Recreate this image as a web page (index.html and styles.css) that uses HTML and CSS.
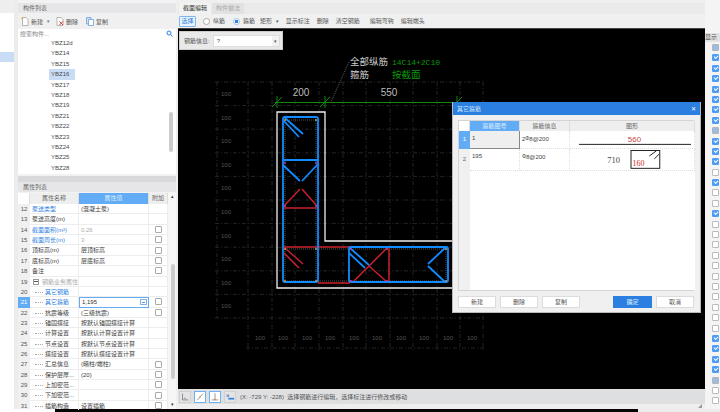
FILE: index.html
```html
<!DOCTYPE html>
<html lang="zh">
<head>
<meta charset="utf-8">
<title>截面编辑</title>
<link rel="stylesheet" href="styles.css">
</head>
<body>
<div class="app">
  <div class="work">
    <div class="nav"><div class="nav-top"></div><div class="nav-sel"></div></div>

    <div class="side">
      <div class="panel-title">构件列表</div>
      <div class="side-tools">
        <span class="tool"><svg class="ic" viewBox="0 0 8 9"><path d="M1.500.5h3.500l2 2v6h-5.500z" fill="#fff" stroke="#999" stroke-width=".7"/><path d="M0 1l2 1M1.500 0v2" stroke="#d9a13a" stroke-width=".7"/></svg>新建</span>
        <span class="caret">▾</span>
        <span class="tool"><svg class="ic" viewBox="0 0 8 9"><path d="M1 .5h4l2 2v6H1z" fill="#fff" stroke="#999" stroke-width=".7"/><path d="M3.500 4.500l3.500 3.500M7 4.500L3.500 8" stroke="#d33" stroke-width="1"/></svg>删除</span>
        <span class="tool"><svg class="ic" viewBox="0 0 8 9"><path d="M.5.500h4.500v6.500H.5z" fill="#cfe2f8" stroke="#5b93d6" stroke-width=".7"/><path d="M2.500 2.500h5v6h-5z" fill="#fff" stroke="#5b93d6" stroke-width=".7"/></svg>复制</span>
      </div>
      <div class="search"><span>搜索构件...</span><svg class="search-ic" viewBox="0 0 7 7"><circle cx="3" cy="3" r="2" fill="none" stroke="#2b7fe0"/><path d="M4.500 4.500L6.500 6.500" stroke="#2b7fe0"/></svg></div>
      <div class="list">
        <div class="list-items">
          <div class="list-item">YBZ12d</div>
          <div class="list-item">YBZ14</div>
          <div class="list-item">YBZ15</div>
          <div class="list-item is-sel">YBZ16</div>
          <div class="list-item">YBZ17</div>
          <div class="list-item">YBZ18</div>
          <div class="list-item">YBZ19</div>
          <div class="list-item">YBZ21</div>
          <div class="list-item">YBZ22</div>
          <div class="list-item">YBZ23</div>
          <div class="list-item">YBZ24</div>
          <div class="list-item">YBZ25</div>
          <div class="list-item">YBZ28</div>
        </div>
        <div class="list-scroll"><div class="list-thumb"></div></div>
      </div>
      <div class="split"></div>
      <div class="panel-title">属性列表</div>
      <div class="props">
        <div class="prop-table">
          <div class="ph"></div><div class="ph">属性名称</div><div class="ph ph-on">属性值</div><div class="ph">附加</div>

          <div class="pn">12</div><div class="pk blue">泵送类型</div><div class="pv">(混凝土泵)</div><div class="pc"></div>
          <div class="pn">13</div><div class="pk">泵送高度(m)</div><div class="pv"></div><div class="pc"></div>
          <div class="pn">14</div><div class="pk blue">截面面积(m²)</div><div class="pv mute">0.26</div><div class="pc"><i class="box"></i></div>
          <div class="pn">15</div><div class="pk blue">截面周长(m)</div><div class="pv mute">3</div><div class="pc"><i class="box"></i></div>
          <div class="pn">16</div><div class="pk">顶标高(m)</div><div class="pv">层顶标高</div><div class="pc"><i class="box"></i></div>
          <div class="pn">17</div><div class="pk">底标高(m)</div><div class="pv">层底标高</div><div class="pc"><i class="box"></i></div>
          <div class="pn">18</div><div class="pk">备注</div><div class="pv"></div><div class="pc"><i class="box"></i></div>
          <div class="pn">19</div><div class="pk mute"><i class="minus"></i>钢筋业务属性</div><div class="pv"></div><div class="pc"></div>
          <div class="pn">20</div><div class="pk tree blue">其它钢筋</div><div class="pv"></div><div class="pc"></div>
          <div class="pn pn-on">21</div><div class="pk tree blue">其它箍筋</div><div class="pv pv-edit">1,195<i class="more"></i></div><div class="pc"><i class="box"></i></div>
          <div class="pn">22</div><div class="pk tree">抗震等级</div><div class="pv">(三级抗震)</div><div class="pc"><i class="box"></i></div>
          <div class="pn">23</div><div class="pk tree">锚固搭接</div><div class="pv">按默认锚固搭接计算</div><div class="pc"></div>
          <div class="pn">24</div><div class="pk tree">计算设置</div><div class="pv">按默认计算设置计算</div><div class="pc"></div>
          <div class="pn">25</div><div class="pk tree">节点设置</div><div class="pv">按默认节点设置计算</div><div class="pc"></div>
          <div class="pn">26</div><div class="pk tree">搭接设置</div><div class="pv">按默认搭接设置计算</div><div class="pc"></div>
          <div class="pn">27</div><div class="pk tree">汇总信息</div><div class="pv">(暗柱/端柱)</div><div class="pc"><i class="box"></i></div>
          <div class="pn">28</div><div class="pk tree">保护层厚...</div><div class="pv">(20)</div><div class="pc"><i class="box"></i></div>
          <div class="pn">29</div><div class="pk tree">上加密范...</div><div class="pv"></div><div class="pc"><i class="box"></i></div>
          <div class="pn">30</div><div class="pk tree">下加密范...</div><div class="pv"></div><div class="pc"><i class="box"></i></div>
          <div class="pn">31</div><div class="pk tree">插筋构造</div><div class="pv">设置插筋</div><div class="pc"><i class="box"></i></div>
        </div>
        <div class="prop-scroll">
          <span class="arrow">▴</span>
          <div class="prop-thumb"></div>
          <span class="arrow arrow-down">▾</span>
        </div>
      </div>
    </div>

    <div class="main">
      <div class="tabs">
        <span class="tab tab-on">截面编辑</span>
        <span class="tab">构件做法</span>
      </div>
      <div class="main-tools">
        <span class="btn-sel">选择</span>
        <span class="radio"><i class="dot"></i>纵筋</span>
        <span class="radio"><i class="dot dot-on"></i>箍筋</span>
        <span class="mtool">矩形 <small>▾</small></span>
        <span class="mtool">显示标注</span>
        <span class="mtool">删除</span>
        <span class="mtool">清空钢筋</span>
        <span class="mtool mtool-sep">编辑弯钩</span>
        <span class="mtool">编辑端头</span>
      </div>
      <div class="canvas">
        <svg class="cad" viewBox="178 29 527 359">
          <g class="grid">
            <path d="M217 82V318M248 82V350M272 82V350M295 82V350M319 82V350M343 82V350M366 82V350M390 82V350M413 82V350M437 82V350M460 82V350M483 82V350"/>
            <path d="M215 82H484M215 105.600H484M215 129.200H484M215 152.800H484M215 176.400H484M215 200H484M215 223.600H484M215 247.200H484M215 270.800H484M215 294.400H484M215 318H484M246 348H484"/>
          </g>
          <g class="lab">
            <text x="226" y="96">100</text><text x="226" y="120">100</text><text x="226" y="143">100</text><text x="226" y="167">100</text><text x="226" y="190">100</text><text x="226" y="214">100</text><text x="226" y="238">100</text><text x="226" y="261">100</text><text x="226" y="285">100</text><text x="226" y="308">100</text>
            <text x="260" y="340">100</text><text x="283" y="340">100</text><text x="307" y="340">100</text><text x="330" y="340">100</text><text x="354" y="340">100</text><text x="377" y="340">100</text><text x="401" y="340">100</text><text x="424" y="340">100</text><text x="448" y="340">100</text><text x="472" y="340">100</text>
          </g>

          <path class="leader" d="M349 62L331 102"/>
          <text class="note" x="350" y="65">全部纵筋</text>
          <text class="note" x="350" y="78">箍筋</text>
          <text class="note-g" x="392" y="65">14C14+2C10</text>
          <text class="note-gc" x="392" y="78">按截面</text>

          <path class="dim" d="M275 102.500H458M277 96V108M325 96V108M457 96V108M272 107L282 97M320 107L330 97M452 107L462 97"/>
          <text class="dimt" x="301" y="96">200</text>
          <text class="dimt" x="389" y="96">550</text>

          <path class="outline" d="M277 112H325V241H457V288H277Z"/>
          <path class="dots" d="M285 120H316V281H285ZM285 249H446V281H316"/>

          <g class="red">
            <path d="M284 247H350M318 283H350M285 248L303 264M284 253L299 268"/>
            <path d="M284 208H317M284 206L300 189M317 206L302 189"/>
            <path d="M387 248L353 282M369 266L387 282M389 248V282"/>
          </g>
          <g class="blue">
            <rect x="283" y="117" width="35" height="165" rx="2"/>
            <rect x="349" y="247" width="99" height="35" rx="2"/>
            <path d="M285 118L303 134M284 121L299 137"/>
            <path d="M283 160H318M283 165L300 181M318 164L302 181"/>
            <path d="M350 248L369 265M349 253L365 268"/>
            <path d="M445 248L428 264M428 266L445 282"/>
          </g>
          <g class="pt-o">
            <circle cx="285" cy="120" r="1"/><circle cx="316" cy="120" r="1"/><circle cx="285" cy="249" r="1"/><circle cx="316" cy="249" r="1"/><circle cx="285" cy="281" r="1"/><circle cx="316" cy="281" r="1"/><circle cx="446" cy="249" r="1"/><circle cx="446" cy="281" r="1"/>
          </g>
          <g class="pt-m">
            <circle cx="285" cy="163" r="1"/><circle cx="316" cy="163" r="1"/><circle cx="285" cy="206" r="1"/><circle cx="316" cy="206" r="1"/><circle cx="351" cy="249" r="1"/><circle cx="351" cy="281" r="1"/><circle cx="387" cy="249" r="1"/><circle cx="387" cy="281" r="1"/>
          </g>
        </svg>
        <div class="info">
          <span class="info-label">钢筋信息:</span>
          <span class="info-input">?<span class="info-drop">▾</span></span>
        </div>
      </div>
      <div class="status">
        <span class="st-btn"><svg viewBox="0 0 12 12"><path d="M3 2V9.500H10" fill="none" stroke="#777"/><path d="M5 7.500H7" stroke="#777"/></svg></span>
        <span class="st-btn st-on"><svg viewBox="0 0 12 12"><path d="M2.500 10L9.500 2" stroke="#888"/><circle cx="6" cy="6" r="1" fill="#e58a2e"/></svg></span>
        <span class="st-btn st-on"><svg viewBox="0 0 12 12"><path d="M6 1.500V9M2 9.500H10" stroke="#888"/><circle cx="6" cy="9" r="1" fill="#e58a2e"/></svg></span>
        <span class="st-btn"><svg viewBox="0 0 12 12"><path d="M2 3h3v3H2z" fill="#7a9cc6"/><path d="M4 7h7v2H4z" fill="#2b7fe0"/></svg></span>
        <span class="st-text">(X: -729 Y: -228)&nbsp; 选择钢筋进行编辑，选择标注进行修改或移动</span>
      </div>
      <div class="foot"><svg class="grip" viewBox="0 0 6 6"><path d="M5 1v4H1zM5 3v2H3z" fill="#999"/></svg></div>
    </div>

    <div class="rail">
      <div class="rail-title">显示</div>
      <div class="rail-list">
        <i class="cb cb-g"></i><i class="cb cb-c"></i><i class="cb cb-c"></i><i class="cb cb-c"></i><i class="cb cb-c"></i><i class="cb cb-c"></i><i class="cb cb-c"></i><i class="cb cb-c"></i>
        <i class="cb cb-g"></i><i class="cb cb-c"></i><i class="cb cb-c"></i><i class="cb cb-c"></i><i class="cb"></i><i class="cb cb-c"></i><i class="cb"></i><i class="cb"></i>
        <i class="cb cb-c"></i><i class="cb"></i><i class="cb"></i><i class="cb"></i><i class="cb"></i><i class="cb"></i><i class="cb"></i><i class="cb"></i>
        <i class="cb"></i><i class="cb"></i><i class="cb"></i><i class="cb"></i><i class="cb cb-c"></i><i class="cb cb-c"></i><i class="cb cb-c"></i><i class="cb cb-c"></i>
        <i class="cb cb-g"></i><i class="cb"></i><i class="cb"></i>
      </div>
    </div>
  </div>
  <div class="strip"><span class="strip-l"></span><span class="strip-b"></span><span class="strip-r"></span></div>

  <div class="dialog">
    <div class="dlg-title"><span>其它箍筋</span><span class="dlg-x">✕</span></div>
    <div class="dlg-body">
      <div class="dlg-table">
        <div class="dh"></div><div class="dh dh-on">箍筋图号</div><div class="dh">箍筋信息</div><div class="dh">图形</div>

        <div class="dn dn-on">1</div><div class="dc dc-sel">1</div><div class="dc">2<b class="rb">Φ</b>8@200</div>
        <div class="dc dc-g">
          <svg class="shape" viewBox="0 0 125 18"><text class="sh-red" x="65" y="11">560</text><path d="M9 13.500H122" stroke="#222" stroke-width="1"/></svg>
        </div>

        <div class="dn">2</div><div class="dc">195</div><div class="dc"><b class="rb">Φ</b>8@200</div>
        <div class="dc dc-g">
          <svg class="shape" viewBox="0 0 125 22"><text class="sh-blk" x="44" y="14">710</text><rect x="61.500" y="1.500" width="29" height="18" fill="#fff" stroke="#222"/><path d="M80 7L87 2M85 10L90 5" stroke="#222"/><text class="sh-red2" x="69" y="17">160</text></svg>
        </div>

        <div class="dn dn-fill"></div><div class="dfill"></div>
      </div>
      <div class="dlg-foot">
        <span class="dbtn">新建</span>
        <span class="dbtn">删除</span>
        <span class="dbtn">复制</span>
        <span class="dgap"></span>
        <span class="dbtn dbtn-p">确定</span>
        <span class="dbtn">取消</span>
      </div>
    </div>
  </div>
</div>
</body>
</html>
```

FILE: styles.css
```css
* { box-sizing: border-box; }
html, body { margin: 0; padding: 0; }
body { width: 720px; height: 412px; overflow: hidden; font: 6px/1 "Liberation Sans", "Noto Sans CJK SC", sans-serif; color: #444; background: #f0f0f0; }
i, b { font-style: normal; font-weight: normal; }

.app { position: relative; width: 720px; height: 412px; display: flex; flex-direction: column; }
.work { display: flex; height: 409px; }

.nav { width: 18px; background: #fff; border-right: 4px solid #ececec; }
.nav-top { height: 13px; background: #eee; }
.nav-sel { margin-top: 39px; height: 10px; background: #c9dcf5; }

.side { width: 158px; display: flex; flex-direction: column; background: #f2f2f2; padding-top: 3px; }
.panel-title { height: 10px; line-height: 10px; padding-left: 5px; background: #e6e6e8; color: #666; flex: none; }
.side-tools { height: 15px; margin-top: 1px; display: flex; align-items: center; padding-left: 3px; background: #f0f0f0; color: #555; flex: none; }
.tool { display: inline-flex; align-items: center; gap: 2px; margin-right: 8px; }
.ic { width: 8px; height: 9px; }
.caret { font-size: 5px; margin: 0 6px 0 -4px; color: #777; }
.search { height: 9px; background: #fff; display: flex; align-items: center; justify-content: space-between; padding: 0 3px 0 2px; color: #888; flex: none; }
.search-ic { width: 7px; height: 7px; }
.list { height: 136px; background: #fff; display: flex; flex: none; }
.list-items { flex: 1; padding: 0 0 0 31px; overflow: hidden; }
.list-item { width: 26px; height: 10.400px; line-height: 10.400px; padding-left: 2px; color: #4a4a4a; white-space: nowrap; }
.list-item.is-sel { background: #c9dcf5; }
.list-scroll { width: 8px; padding: 74px 3px 0 1px; }
.list-thumb { width: 4px; height: 40px; background: #ccc; border-radius: 2px; }
.split { height: 6px; background: #d9d9dc; margin-top: 2px; flex: none; }

.props { display: flex; background: #fff; height: 217px; margin-top: 1px; overflow: hidden; flex: none; }
.prop-table { width: 150px; display: grid; grid-template-columns: 12px 49px 70px 19px; grid-template-rows: 11px; grid-auto-rows: 10.370px; align-content: start; }
.ph { background: #eee; color: #666; text-align: center; line-height: 11px; border-right: 1px solid #ddd; }
.ph:first-child { background: #fff; }
.ph-on { background: #62acf5; color: #dcecff; }
.pn { background: #f0f0f0; color: #555; text-align: center; line-height: 10.370px; }
.pn-on { background: #62acf5; color: #fff; }
.pk, .pv, .pc { border-bottom: 1px solid #ededed; border-right: 1px solid #ededed; line-height: 10px; white-space: nowrap; overflow: hidden; color: #3c3c3c; padding-left: 2px; }
.pk.blue { color: #2f7fe0; }
.pk.mute, .pv.mute { color: #aaa; }
.pk.tree { padding-left: 15px; position: relative; }
.pk.tree::before { content: ""; position: absolute; left: 5px; top: 5px; width: 8px; border-top: 1px dotted #aaa; }
.minus { display: inline-block; width: 6px; height: 6px; border: 1px solid #999; margin: 2px 3px 0 1px; vertical-align: top; background: linear-gradient(#555, #555) center / 4px 1px no-repeat; }
.pv-edit { color: #333; background: #fff; border: 1px solid #62acf5; position: relative; line-height: 9px; }
.more { position: absolute; right: 1px; top: 1px; width: 7px; height: 6px; border: 1px solid #7fb2ea; background: linear-gradient(#5b93d6, #5b93d6) center / 3px 1px no-repeat; }
.pc { display: flex; align-items: center; justify-content: center; padding: 0; }
.box { display: block; width: 7px; height: 7px; background: #fff; border: 1px solid #aaa; border-radius: 1px; }
.prop-scroll { flex: 1; display: flex; flex-direction: column; align-items: center; background: #f6f6f6; padding-left: 1px; }
.arrow { font-size: 5px; color: #333; height: 5px; margin-top: 1px; }
.prop-thumb { width: 4px; height: 115px; margin-top: 65px; background: #ccc; border-radius: 2px; }
.arrow-down { margin-top: 23px; }

.main { width: 529px; display: flex; flex-direction: column; padding: 3px 0 0 2px; background: #efefef; }
.tabs { height: 11px; display: flex; padding-left: 1px; background: #eaeaea; flex: none; }
.tab { width: 32px; text-align: center; line-height: 10px; color: #aaa; background: #e2e2e2; margin-right: 1px; white-space: nowrap; }
.tab-on { color: #333; background: #f2f2f2; }
.main-tools { height: 15px; display: flex; align-items: center; padding-left: 1px; background: #f0f0f0; color: #555; flex: none; border-bottom: 1px solid #444; }
.btn-sel { width: 17px; height: 11px; line-height: 9px; text-align: center; background: #eaf3fd; border: 1px solid #7fb7f2; border-radius: 1px; color: #2f7fe0; margin-right: 7px; }
.radio { display: inline-flex; align-items: center; gap: 3px; margin-right: 8px; }
.radio + .mtool { margin-left: -3px; }
.dot { width: 7px; height: 7px; border: 1px solid #aaa; border-radius: 50%; background: #fff; }
.dot-on { background: radial-gradient(circle, #2b7fe0 0 1.500px, #fff 2px); border-color: #9ec4ee; }
.mtool { margin-right: 7px; white-space: nowrap; }
.mtool small { font-size: 5px; margin-left: 2px; }
.mtool-sep { margin-left: 3px; }
.canvas { position: relative; flex: 1; background: #000; overflow: hidden; }
.cad { display: block; width: 527px; height: 359px; }

.grid path { fill: none; stroke: #2a2e33; stroke-width: .8; stroke-dasharray: 4 2 1 2; }
.lab text { fill: #555; font: 6px "Liberation Sans", sans-serif; text-anchor: middle; }
.leader { fill: none; stroke: #888; stroke-width: .7; stroke-dasharray: 1 1; }
.note { fill: #ccc; font: 9.500px "Liberation Serif", "Noto Sans CJK SC", serif; }
.note-g { fill: #0b9a0b; font: 8px "Liberation Mono", monospace; }
.note-gc { fill: #0b9a0b; font: 9.500px "Noto Sans CJK SC", sans-serif; }
.dim { fill: none; stroke: #0f9a0f; stroke-width: .9; }
.dimt { fill: #bbb; font: 10px "Liberation Sans", sans-serif; text-anchor: middle; }
.outline { fill: none; stroke: #f0f0f0; stroke-width: 1.300; }
.dots { fill: none; stroke: #888; stroke-width: .6; stroke-dasharray: 1 1; }
.red path { fill: none; stroke: #c8202c; stroke-width: 1.500; }
.blue rect, .blue path { fill: none; stroke: #118bff; stroke-width: 1.800; }
.pt-o circle { fill: #c79a4a; }
.pt-m circle { fill: #b03fb0; }

.info { position: absolute; left: 1px; top: 2px; width: 104px; height: 19px; background: #e9e9e9; border: 1px solid #ccc; display: flex; align-items: center; padding-left: 4px; color: #555; gap: 3px; }
.info-label { white-space: nowrap; }
.info-input { width: 67px; height: 12px; background: #fff; border: 1px solid #ddd; line-height: 10px; padding-left: 3px; display: flex; justify-content: space-between; }
.info-drop { width: 7px; font-size: 5px; text-align: center; background: #f2f2f2; line-height: 10px; }

.status { height: 15px; display: flex; align-items: center; gap: 3px; background: #dedfe1; flex: none; padding-left: 1px; }
.st-btn { width: 12px; height: 12px; background: #e4e4e6; border: 1px solid #d0d0d0; flex: none; display: block; }
.st-btn svg { display: block; width: 10px; height: 10px; }
.st-on { background: #fff; border-color: #6fb0f0; }
.st-text { color: #555; margin-left: 1px; white-space: nowrap; }
.foot { height: 5px; flex: none; background: #eeeeee; display: flex; justify-content: flex-end; align-items: flex-end; }
.grip { width: 6px; height: 6px; margin: 0 2px 0 0; }

.rail { width: 15px; background: #f4f4f4; display: flex; flex-direction: column; padding-top: 33px; overflow: hidden; }
.rail-title { height: 9px; line-height: 9px; width: 15px; white-space: nowrap; background: #e2e2e2; color: #555; flex: none; }
.rail-list { display: flex; flex-direction: column; align-items: flex-end; padding: 2px 1px 0 0; }
.cb { display: block; width: 7px; height: 7px; margin-bottom: 3.400px; border: 1px solid #bbb; background: #fff; border-radius: 1px; flex: none; position: relative; }
.cb-c { background: #4d9cf5; border-color: #4d9cf5; }
.cb-c::after { content: ""; position: absolute; left: 1px; top: 0; width: 3px; height: 2px; border-left: 1px solid #fff; border-bottom: 1px solid #fff; transform: rotate(-45deg); }
.cb-g { background: #9dbce4; border-color: #b4b4b4; }

.strip { height: 3px; display: flex; flex: none; }
.strip-l { width: 55px; background: #fff; }
.strip-b { width: 583px; background: #050505; }
.strip-r { flex: 1; background: #ececec; }

.dialog { position: absolute; left: 452px; top: 102px; width: 249px; height: 211px; display: flex; flex-direction: column; background: #f0f0f0; border: 1px solid #b9b9bd; border-top: 0; }
.dlg-title { height: 13px; background: #2b7fe0; color: #cfe3fb; display: flex; justify-content: space-between; align-items: center; padding: 0 4px; flex: none; }
.dlg-x { color: #fff; font-size: 6px; }
.dlg-body { flex: 1; display: flex; flex-direction: column; padding: 5px 6px 5px 5px; }
.dlg-table { height: 171px; display: grid; grid-template-columns: 11px 50px 50px 125px; grid-template-rows: 10px 18px 22px 1fr; border: 1px solid #d4d4d4; background: #fff; flex: none; }
.dh { background: #eeeeee; color: #666; text-align: center; line-height: 10px; border-right: 1px solid #ddd; }
.dh:first-child { background: #fff; }
.dh-on { background: #62acf5; color: #dcecff; }
.dn { background: #f0f0f0; color: #666; text-align: center; line-height: 17px; }
.dn-on { background: #62acf5; color: #fff; }
.dn:nth-child(9) { line-height: 21px; }
.dc { background: #fff; color: #444; border-right: 1px dotted #ddd; border-bottom: 1px dotted #ddd; padding-left: 2px; line-height: 15px; white-space: nowrap; }
.dc-sel { background: #efefef; border: 1px solid #888; border-width: 0 1px 1px 0; }
.dc-g { padding: 0; }
.rb { font-size: 5px; vertical-align: 1px; }
.shape { display: block; width: 124px; }
.sh-red { fill: #c04a4a; font: 8px "Liberation Sans", sans-serif; text-anchor: middle; }
.sh-blk { fill: #444; font: 8.500px "Liberation Serif", serif; text-anchor: middle; }
.sh-red2 { fill: #d02a2a; font: 8px "Liberation Serif", serif; text-anchor: middle; }
.dn-fill { background: #f0f0f0; }
.dfill { grid-column: span 3; background: #fff; }
.dlg-foot { display: flex; gap: 4px; margin-top: 5px; height: 12px; flex: none; }
.dbtn { width: 39px; height: 12px; line-height: 11px; text-align: center; background: #fff; border: 1px solid #dcdcdc; color: #555; }
.dgap { width: 26px; }
.dbtn-p { width: 40px; background: #2b7fe0; border-color: #2b7fe0; color: #dcecff; }
```
